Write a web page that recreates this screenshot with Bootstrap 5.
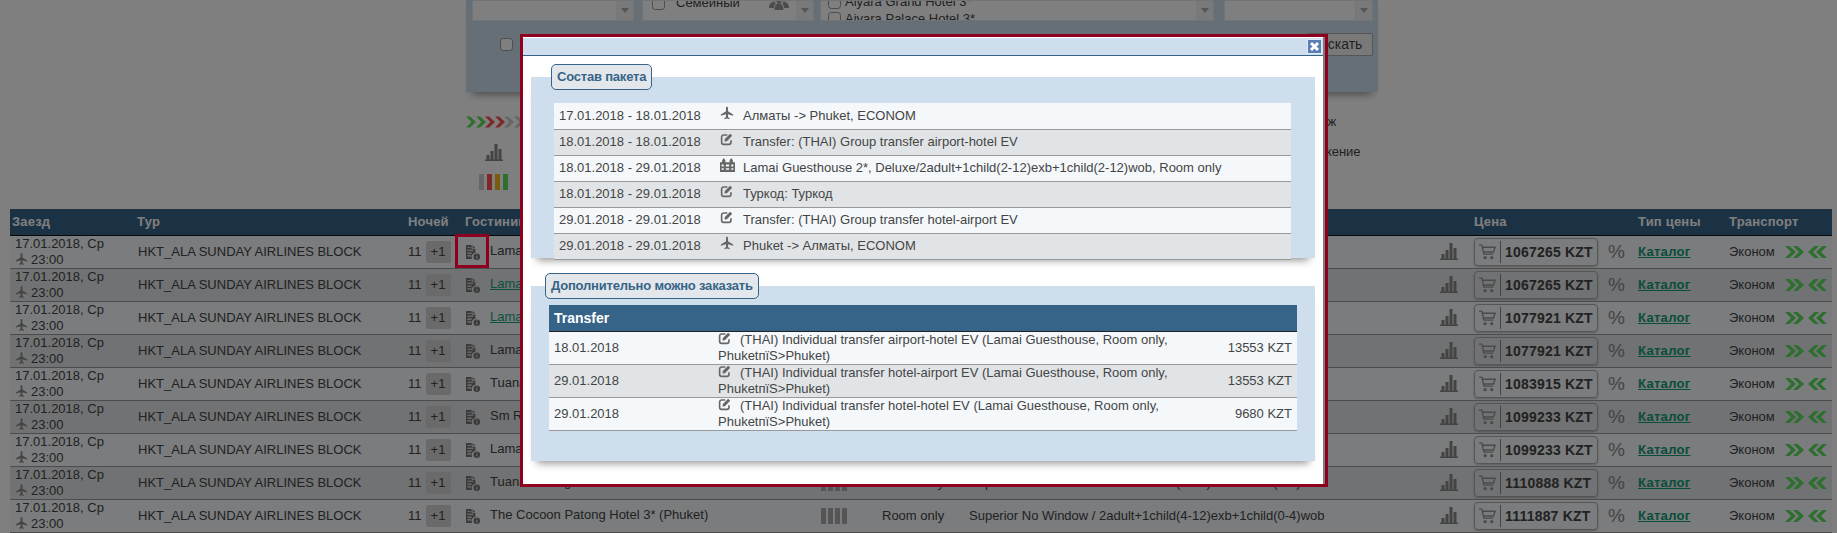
<!DOCTYPE html>
<html lang="ru">
<head>
<meta charset="utf-8">
<title>Тур</title>
<link href="https://cdn.jsdelivr.net/npm/bootstrap@5.3.0/dist/css/bootstrap.min.css" rel="stylesheet">
<style>
html,body{height:100%;overflow:hidden;margin:0}
body{position:relative;background:#fff;color:#444;font:13px/16px "Liberation Sans",Arial,sans-serif}
.ico{display:inline-block;vertical-align:middle;fill:currentColor;flex:none}
.filter-panel{width:912px;height:92px;margin-left:466px;background:#cfdeed;box-shadow:0 8px 8px -6px rgba(0,0,0,.45);padding-left:6px;padding-right:5px}
.box-row{height:21px;gap:8px}
.sel-box{height:21px;background:#fff;border:1px solid #e3e8ee;overflow:hidden;position:relative}
.w-a{width:162px}.w-b{width:172px}.w-c{width:394px;margin-left:-2px}.w-d{width:149px;margin-left:2px}
.sel-in{margin-top:-6px;padding-left:9px}
.w-c .sel-in{padding-left:7px;margin-top:-7px}
.sel-line{height:16.5px;gap:4px;white-space:nowrap}
.sel-line input{width:13px;height:13px;margin:0;border-color:#999;border-radius:2px}
.sel-scroll{width:17px;background:#f3f3f3;border-left:1px solid #eee}
.sel-arrow{width:0;height:0;border:4px solid transparent;border-top:5px solid #aaa;border-bottom:0}
.people{color:#999;margin-left:auto;margin-right:7px}
.name-b{margin-left:7px}
.search-row{height:23px;margin-top:12px;padding-left:28px}
.search-row input{width:13px;height:13px;margin:0;border-color:#999;border-radius:2px}
.search-btn{width:66px;height:23px;padding:0;font-size:14px;line-height:21px;color:#444;background:#f3f3f3;border:1px solid #aaa;border-radius:2px}
.legend-wrap{width:912px;margin-left:466px;padding-top:15px;height:117px}
.leg-row{height:30px}
.leg-icon{width:834px}
.leg-chev svg{margin-right:-.5px}
.leg-chart{margin-left:19px;color:#888}
.leg-bars{margin-left:13px;gap:3px}
.leg-bars i{display:block;width:5px;height:16px}
.c-gray{background:#ccc}.c-red{background:#fa5050}.c-amber{background:#f5b820}.c-green{background:#5cdc5c}
.tone-g{color:#5cdc5c}.tone-r{color:#fa5050}.tone-n{color:#ccc}
.stars i{display:block;width:5px;height:16px;background:#aaa}
.stars{gap:2px;margin-left:3px}
.res-wrap{padding-left:10px;width:1832px}
.res-table{table-layout:fixed;width:1822px}
.res-table>:not(caption)>*>*{padding:0;border-bottom:1px solid #999;vertical-align:middle;color:#444;font-size:13px;line-height:16px;white-space:nowrap}
.res-table thead th{background:#366488;color:#fff;height:26px;padding-left:2px;border-bottom:1px solid #111;font-weight:700;letter-spacing:.2px}
.res-table tbody td{height:33px;background:#f4f8fb;overflow:visible}
.res-table tbody tr:nth-child(even) td{background:#e1e4e7}
.res-table thead th.th-price{padding-left:4px}
.c1{width:125px}.c2{width:271px}.c3{width:57px}.c4{width:355px}.c5{width:64px}.c6{width:87px}.c7{width:461px}.c8{width:40px}.c9{width:133px}.c10{width:33px}.c11{width:91px}.c12{width:105px}
.res-table tbody td.t-date{padding-left:5px}
.plane-sm{color:#888;margin-right:3px;margin-top:-2px}
.res-table tbody td.t-tour{padding-left:3px}
.res-table tbody td.t-n{padding-left:2px}
.plus{width:25px;height:22px;background:#d5d5d5;border-radius:2px;margin-left:1px}
.nights{gap:3px}
.res-table tbody td.t-hotel{padding-left:3px;position:relative}
.doc{color:#777;margin-right:9px}
.hotel-link{color:#17a27c;text-decoration:underline}
.mark-box{position:absolute;left:-8px;top:-2px;width:34px;height:34px;border:3px solid #8f0020;z-index:20}
.res-table tbody td.t-chart{padding-left:10px;color:#888}
.res-table tbody td.t-price{padding-left:4px}
.price-btn{width:124px;height:28px;padding:0;background:transparent;border:1px solid #aaa;border-radius:4px;box-shadow:0 1px 2px rgba(0,0,0,.25);color:#444;font-weight:700;font-size:14px;line-height:26px;letter-spacing:.2px}
.cart-part{width:26px;height:22px;border-right:1px solid #888;color:#959595;margin-right:4px}
.res-table tbody td.t-pct{padding-left:5px;color:#888;font-size:19px}
.res-table tbody td.t-cat{padding-left:2px}
.cat-link{color:#129a78;font-weight:700;text-decoration:underline;letter-spacing:.3px}
.res-table tbody td.t-tr{padding-left:2px}
.chev{color:#5cdc5c;margin-left:10px;gap:4px}
.chev svg+svg{margin-left:-3px}
.dim{position:absolute;inset:0;background:rgba(0,0,0,.5);z-index:10}
.pop{position:absolute;left:520px;top:34px;width:808px;height:453px;border:3px solid #8f0020;background:#fff;z-index:20;box-shadow:inset -2px 0 0 #7d7d7d;padding-right:2px;padding-top:1px}
.pop-title{height:18px;background:#cfdeed;border-bottom:1px solid #366488;padding-right:1px}
.pop-close{width:15px;height:15px;padding:0;border:1px solid #dfe8f3;background:#5a7db5;line-height:0}
.sect{background:#cfdeed;margin-left:8px;margin-right:8px;box-shadow:0 8px 8px -6px rgba(0,0,0,.45)}
.sect-a{height:181px;margin-top:21px}
.sect-b{height:175px;margin-top:28px}
.sect-legend{display:inline-block;height:26px;margin-top:-13px;padding:0 5px;border:1px solid #366488;border-radius:5px;background:#e3e7eb;color:#366488;font-weight:700;line-height:24px;vertical-align:top;letter-spacing:-.2px}
.sect-a .sect-legend{margin-left:20px}
.sect-b .sect-legend{margin-left:14px}
.pkg-table{table-layout:fixed;width:737px;margin:10px 0 0 23px}
.extra-table{table-layout:fixed;width:748px;margin:3px 0 0 18px}
.pkg-table>:not(caption)>*>*,.extra-table>:not(caption)>*>*{padding:0 0 0 5px;border-bottom:1px solid #999;color:#444;font-size:13px;line-height:16px;vertical-align:middle}
.pkg-table td{height:26px;background:#f4f8fb;white-space:nowrap}
.pkg-table tr:nth-child(even) td{background:#e1e4e7}
.extra-table td{height:33px;background:#f4f8fb}
.extra-table tr:nth-child(even) td{background:#e1e4e7}
.extra-table th{height:26px;background:#366488;color:#fff!important;font-size:14px!important;border-bottom:1px solid #222!important;font-weight:700}
.p1{width:164px}.p2{width:20px}
.pkg-table td.p-ico{padding-left:2px;color:#666}
.pkg-table td.p-ico svg{margin-top:-7px}
.e1{width:164px}.e3{width:110px}
.extra-table td.e-price{text-align:right;padding-right:5px;white-space:nowrap}
.e-ico{color:#666;margin-top:-3px;margin-right:9px}
</style>
</head>
<body>
<svg class="d-none" xmlns="http://www.w3.org/2000/svg">
  <symbol id="i-plane" viewBox="0 0 24 24"><path d="M12 1c-1 0-1.7 1.400-1.700 3.200V9L1.500 14.600v2.200l8.800-2.700v4.800L7.600 21v1.700l4.400-1.100 4.400 1.100V21l-2.700-2.100v-4.800l8.800 2.700v-2.200L13.700 9V4.200C13.700 2.400 13 1 12 1z"/></symbol>
  <symbol id="i-edit" viewBox="0 0 16 16"><path fill="none" stroke="currentColor" stroke-width="2" d="M13.500 9v2.500A2.500 2.500 0 0 1 11 14H4.500A2.500 2.500 0 0 1 2 11.500V5a2.500 2.500 0 0 1 2.500-2.500H9"/><path d="M6 7.500 12.500 1 15 3.500 8.500 10 5.500 10.500z"/></symbol>
  <symbol id="i-hotel" viewBox="0 0 14 13"><path fill-rule="evenodd" d="M0 13V4h2V2l1.500-2L5 2v2h4V2l1.500-2L12 2v2h2v9zM1.500 6v2h2V6zm4 0v2h3V6zm5 0v2h2V6zm-9 3.500V11h2V9.500zm4 0V11h3V9.500zm5 0V11h2V9.500z"/></symbol>
  <symbol id="i-doc" viewBox="0 0 16 16"><path fill-rule="evenodd" d="M0 0h6v4h4v4.200A4.500 4.500 0 0 0 6.600 15H0zM1.500 2v1H5V2zm0 3v1.200H8V5zm0 3v1.200H6V8zm0 3v1.200h4V11zM7 0l3 3H7z"/><path fill-rule="evenodd" d="M11.500 9a3.500 3.500 0 1 1 0 7 3.500 3.500 0 0 1 0-7zM11 10v1h1.100v-1zm0 2v2.500h1.100V12z"/></symbol>
  <symbol id="i-chart" viewBox="0 0 18 17"><path d="M0 15.600h18V17H0zM1.500 11h3v4.600h-3zM5.500 7h3v8.600h-3zM9.500 0h3v15.600h-3zM13.500 5h3v10.600h-3z"/></symbol>
  <symbol id="i-cart" viewBox="0 0 18 17"><path fill="none" stroke="currentColor" stroke-width="1.500" d="M0 1.200h3l2.200 9.600h10M3.600 3.500H17l-1.600 5H5"/><circle cx="6.500" cy="14.500" r="1.700"/><circle cx="13.500" cy="14.500" r="1.700"/></symbol>
  <symbol id="i-chev-r" viewBox="0 0 11 12"><path d="M0 0h4.500L11 6 4.500 12H0l6-6z"/></symbol>
  <symbol id="i-chev-l" viewBox="0 0 11 12"><path d="M11 0H6.500L0 6l6.500 6H11L5 6z"/></symbol>
  <symbol id="i-people" viewBox="0 0 20 14"><circle cx="5" cy="3" r="2.500"/><circle cx="15" cy="3" r="2.500"/><circle cx="10" cy="4.500" r="2.800"/><path d="M0 12c0-4 2-6 5-6l2 1c-1 1-2 3-2 5zM20 12c0-4-2-6-5-6l-2 1c1 1 2 3 2 5zM5.500 14c0-4 2-7 4.500-7s4.500 3 4.500 7z"/></symbol>
</svg>

<div class="filter-panel">
  <div class="box-row d-flex">
    <div class="sel-box w-a d-flex justify-content-end"><div class="sel-scroll d-flex align-items-center justify-content-center"><span class="sel-arrow"></span></div></div>
    <div class="sel-box w-b d-flex">
      <div class="sel-in flex-grow-1"><div class="sel-line d-flex align-items-center"><input class="form-check-input" type="checkbox"><span class="name-b">Семейный</span><svg class="ico people" width="20" height="14"><use href="#i-people"/></svg></div></div>
      <div class="sel-scroll d-flex align-items-center justify-content-center"><span class="sel-arrow"></span></div>
    </div>
    <div class="sel-box w-c d-flex">
      <div class="sel-in flex-grow-1">
        <div class="sel-line d-flex align-items-center"><input class="form-check-input" type="checkbox"><span>Aiyara Grand Hotel 3*</span></div>
        <div class="sel-line d-flex align-items-center"><input class="form-check-input" type="checkbox"><span>Aiyara Palace Hotel 3*</span></div>
      </div>
      <div class="sel-scroll d-flex align-items-center justify-content-center"><span class="sel-arrow"></span></div>
    </div>
    <div class="sel-box w-d d-flex justify-content-end"><div class="sel-scroll d-flex align-items-center justify-content-center"><span class="sel-arrow"></span></div></div>
  </div>
  <div class="search-row d-flex align-items-center justify-content-between">
    <input class="form-check-input" type="checkbox">
    <button class="btn search-btn" type="button">Искать</button>
  </div>
</div>

<div class="legend-wrap">
  <div class="leg-row d-flex align-items-center">
    <div class="leg-icon leg-chev d-flex">
      <svg class="ico tone-g" width="10" height="12"><use href="#i-chev-r"/></svg><svg class="ico tone-g" width="10" height="12"><use href="#i-chev-r"/></svg><svg class="ico tone-r" width="10" height="12"><use href="#i-chev-r"/></svg><svg class="ico tone-r" width="10" height="12"><use href="#i-chev-r"/></svg><svg class="ico tone-n" width="10" height="12"><use href="#i-chev-r"/></svg><svg class="ico tone-n" width="10" height="12"><use href="#i-chev-r"/></svg>
    </div>
    <span>Багаж</span>
  </div>
  <div class="leg-row d-flex align-items-center">
    <div class="leg-icon"><svg class="ico leg-chart" width="18" height="17"><use href="#i-chart"/></svg></div>
    <span>Движение</span>
  </div>
  <div class="leg-row d-flex align-items-center">
    <div class="leg-bars d-flex"><i class="c-gray"></i><i class="c-red"></i><i class="c-amber"></i><i class="c-green"></i></div>
  </div>
</div>

<div class="res-wrap">
<table class="table res-table mb-0" id="results">
  <colgroup><col class="c1"><col class="c2"><col class="c3"><col class="c4"><col class="c5"><col class="c6"><col class="c7"><col class="c8"><col class="c9"><col class="c10"><col class="c11"><col class="c12"></colgroup>
  <thead><tr><th>Заезд</th><th>Тур</th><th>Ночей</th><th>Гостиница</th><th></th><th>Питание</th><th colspan="2">Номер</th><th class="th-price" colspan="2">Цена</th><th>Тип цены</th><th>Транспорт</th></tr></thead>
  <tbody id="rows"></tbody>
</table>
</div>

<div class="dim"></div>

<div class="pop">
  <div class="pop-title d-flex justify-content-end align-items-center">
    <button class="pop-close d-flex align-items-center justify-content-center" type="button" aria-label="Закрыть"><svg width="11" height="11" viewBox="0 0 11 11"><path d="M2 2l7 7M9 2l-7 7" stroke="#fff" stroke-width="3"/></svg></button>
  </div>
  <div class="sect sect-a">
    <div class="sect-legend">Состав пакета</div>
    <table class="table pkg-table mb-0">
      <colgroup><col class="p1"><col class="p2"><col></colgroup>
      <tbody>
        <tr><td>17.01.2018 - 18.01.2018</td><td class="p-ico"><svg class="ico" width="14" height="14"><use href="#i-plane"/></svg></td><td>Алматы -&gt; Phuket, ECONOM</td></tr>
        <tr><td>18.01.2018 - 18.01.2018</td><td class="p-ico"><svg class="ico" width="13" height="13"><use href="#i-edit"/></svg></td><td>Transfer: (THAI) Group transfer airport-hotel EV</td></tr>
        <tr><td>18.01.2018 - 29.01.2018</td><td class="p-ico"><svg class="ico" width="15" height="14"><use href="#i-hotel"/></svg></td><td>Lamai Guesthouse 2*, Deluxe/2adult+1child(2-12)exb+1child(2-12)wob, Room only</td></tr>
        <tr><td>18.01.2018 - 29.01.2018</td><td class="p-ico"><svg class="ico" width="13" height="13"><use href="#i-edit"/></svg></td><td>Туркод: Туркод</td></tr>
        <tr><td>29.01.2018 - 29.01.2018</td><td class="p-ico"><svg class="ico" width="13" height="13"><use href="#i-edit"/></svg></td><td>Transfer: (THAI) Group transfer hotel-airport EV</td></tr>
        <tr><td>29.01.2018 - 29.01.2018</td><td class="p-ico"><svg class="ico" width="14" height="14"><use href="#i-plane"/></svg></td><td>Phuket -&gt; Алматы, ECONOM</td></tr>
      </tbody>
    </table>
  </div>
  <div class="sect sect-b">
    <div class="sect-legend">Дополнительно можно заказать</div>
    <table class="table extra-table mb-0">
      <colgroup><col class="e1"><col><col class="e3"></colgroup>
      <thead><tr><th colspan="3">Transfer</th></tr></thead>
      <tbody>
        <tr><td>18.01.2018</td><td><svg class="ico e-ico" width="13" height="13"><use href="#i-edit"/></svg>(THAI) Individual transfer airport-hotel EV (Lamai Guesthouse, Room only, PhuketпїЅ&gt;Phuket)</td><td class="e-price">13553 KZT</td></tr>
        <tr><td>29.01.2018</td><td><svg class="ico e-ico" width="13" height="13"><use href="#i-edit"/></svg>(THAI) Individual transfer hotel-airport EV (Lamai Guesthouse, Room only, PhuketпїЅ&gt;Phuket)</td><td class="e-price">13553 KZT</td></tr>
        <tr><td>29.01.2018</td><td><svg class="ico e-ico" width="13" height="13"><use href="#i-edit"/></svg>(THAI) Individual transfer hotel-hotel EV (Lamai Guesthouse, Room only, PhuketпїЅ&gt;Phuket)</td><td class="e-price">9680 KZT</td></tr>
      </tbody>
    </table>
  </div>
</div>

<script>
var data=[
 ["Lamai Guesthouse 2*",0,"1067265"],["Lamai Guesthouse 2*",1,"1067265"],["Lamai Guesthouse 2*",1,"1077921"],
 ["Lamai Guesthouse 2*",0,"1077921"],["Tuana Patong Hotel 3*",0,"1083915"],["Sm Resort 3*",0,"1099233"],
 ["Lamai Guesthouse 2*",0,"1099233"],["Tuana Patong Hotel 3*",0,"1110888"],["The Cocoon Patong Hotel 3* (Phuket)",0,"1111887"]];
var html="";
data.forEach(function(r,i){
 var name=r[1]?'<a class="hotel-link" href="#">'+r[0]+'</a>':r[0];
 html+='<tr><td class="t-date">17.01.2018, Ср<br><svg class="ico plane-sm" width="13" height="14"><use href="#i-plane"/></svg>23:00</td>'
 +'<td class="t-tour">HKT_ALA SUNDAY AIRLINES BLOCK</td>'
 +'<td class="t-n"><div class="d-flex align-items-center nights"><span>11</span><span class="plus d-flex align-items-center justify-content-center">+1</span></div></td>'
 +'<td class="t-hotel"><svg class="ico doc" width="15" height="15"><use href="#i-doc"/></svg>'+name+(i==0?'<span class="mark-box"></span>':'')+'</td>'
 +'<td><div class="stars d-flex"><i></i><i></i><i></i><i></i></div></td>'
 +'<td class="ps-0">Room only</td>'
 +'<td>Superior No Window / 2adult+1child(4-12)exb+1child(0-4)wob</td>'
 +'<td class="t-chart"><svg class="ico" width="18" height="17"><use href="#i-chart"/></svg></td>'
 +'<td class="t-price"><button class="btn price-btn d-flex align-items-center" type="button"><span class="cart-part d-flex align-items-center justify-content-center"><svg class="ico" width="17" height="16"><use href="#i-cart"/></svg></span>'+r[2]+' KZT</button></td>'
 +'<td class="t-pct">%</td>'
 +'<td class="t-cat"><a class="cat-link" href="#">Каталог</a></td>'
 +'<td class="t-tr"><div class="d-flex align-items-center">Эконом<span class="chev d-flex"><span class="d-flex"><svg class="ico" width="11" height="12"><use href="#i-chev-r"/></svg><svg class="ico" width="11" height="12"><use href="#i-chev-r"/></svg></span><span class="d-flex"><svg class="ico" width="11" height="12"><use href="#i-chev-l"/></svg><svg class="ico" width="11" height="12"><use href="#i-chev-l"/></svg></span></span></div></td></tr>';
});
document.getElementById("rows").innerHTML=html;
</script>
<script src="https://cdn.jsdelivr.net/npm/bootstrap@5.3.0/dist/js/bootstrap.bundle.min.js"></script>
</body>
</html>
